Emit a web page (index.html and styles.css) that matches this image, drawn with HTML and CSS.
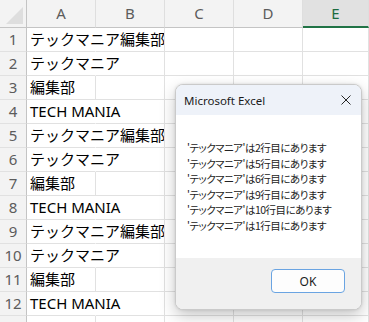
FILE: index.html
```html
<!DOCTYPE html>
<html lang="ja">
<head>
<meta charset="utf-8">
<link rel="stylesheet" href="styles.css">
</head>
<body>
<div class="sheet">
  <div class="row head">
    <div class="corner"><span class="tri"></span></div>
    <div class="ch">A</div><div class="ch">B</div><div class="ch">C</div><div class="ch">D</div><div class="ch sel">E</div>
  </div>
  <div class="row"><div class="rh">1</div><div class="c nb">テックマニア編集部</div><div class="c"></div><div class="c"></div><div class="c"></div><div class="c last"></div></div>
  <div class="row"><div class="rh">2</div><div class="c nb">テックマニア</div><div class="c"></div><div class="c"></div><div class="c"></div><div class="c last"></div></div>
  <div class="row"><div class="rh">3</div><div class="c">編集部</div><div class="c"></div><div class="c"></div><div class="c"></div><div class="c last"></div></div>
  <div class="row"><div class="rh">4</div><div class="c nb">TECH MANIA</div><div class="c"></div><div class="c"></div><div class="c"></div><div class="c last"></div></div>
  <div class="row"><div class="rh">5</div><div class="c nb">テックマニア編集部</div><div class="c"></div><div class="c"></div><div class="c"></div><div class="c last"></div></div>
  <div class="row"><div class="rh">6</div><div class="c nb">テックマニア</div><div class="c"></div><div class="c"></div><div class="c"></div><div class="c last"></div></div>
  <div class="row"><div class="rh">7</div><div class="c">編集部</div><div class="c"></div><div class="c"></div><div class="c"></div><div class="c last"></div></div>
  <div class="row"><div class="rh">8</div><div class="c nb">TECH MANIA</div><div class="c"></div><div class="c"></div><div class="c"></div><div class="c last"></div></div>
  <div class="row"><div class="rh">9</div><div class="c nb">テックマニア編集部</div><div class="c"></div><div class="c"></div><div class="c"></div><div class="c last"></div></div>
  <div class="row"><div class="rh">10</div><div class="c nb">テックマニア</div><div class="c"></div><div class="c"></div><div class="c"></div><div class="c last"></div></div>
  <div class="row"><div class="rh">11</div><div class="c">編集部</div><div class="c"></div><div class="c"></div><div class="c"></div><div class="c last"></div></div>
  <div class="row"><div class="rh">12</div><div class="c nb">TECH MANIA</div><div class="c"></div><div class="c"></div><div class="c"></div><div class="c last"></div></div>
  <div class="row"><div class="rh"></div><div class="c"></div><div class="c"></div><div class="c"></div><div class="c"></div><div class="c last"></div></div>
</div>

<div class="dlg">
  <div class="tb">
    <span class="title">Microsoft Excel</span>
    <svg class="close" width="10" height="10" viewBox="0 0 10 10"><path d="M0.5 0.5L9.5 9.5M9.5 0.5L0.5 9.5" stroke="#262626" stroke-width="1" fill="none"/></svg>
  </div>
  <div class="msg">
    <div>'テックマニア'は2行目にあります</div>
    <div>'テックマニア'は5行目にあります</div>
    <div>'テックマニア'は6行目にあります</div>
    <div>'テックマニア'は9行目にあります</div>
    <div>'テックマニア'は10行目にあります</div>
    <div>'テックマニア'は1行目にあります</div>
  </div>
  <div class="ft">
    <div class="ok">OK</div>
  </div>
</div>
</body>
</html>
```

FILE: styles.css
```css
* { box-sizing: border-box; }
html, body { margin: 0; padding: 0; }
body {
  width: 369px;
  height: 322px;
  overflow: hidden;
  background: #fff;
  position: relative;
  font-family: "Noto Sans", "Noto Sans CJK JP", sans-serif;
}
.sheet { display: flex; flex-direction: column; }
.row { display: flex; height: 24px; flex: none; }
.row.head { height: 28px; }

.corner {
  width: 27px;
  height: 28px;
  background: #f3f3f3;
  border-right: 1px solid #c4c4c4;
  border-bottom: 1px solid #c4c4c4;
  display: flex;
  align-items: flex-end;
  justify-content: flex-end;
  padding: 0 3px 3px 0;
}
.tri {
  width: 0;
  height: 0;
  border-left: 17px solid transparent;
  border-bottom: 17px solid #dedede;
}
.ch {
  width: 69px;
  height: 28px;
  flex: none;
  background: #f3f3f3;
  border-right: 1px solid #dedede;
  border-bottom: 1px solid #c4c4c4;
  text-align: center;
  font-size: 15px;
  line-height: 27px;
  color: #5c5c5c;
}
.ch.sel {
  flex: 1;
  background: #e1e1e1;
  color: #1c6b40;
  border-bottom: 2px solid #217346;
}
.rh {
  width: 27px;
  flex: none;
  background: #f3f3f3;
  border-right: 1px solid #c4c4c4;
  border-bottom: 1px solid #e1e1e1;
  text-align: center;
  font-size: 15px;
  line-height: 23px;
  color: #5c5c5c;
}
.c {
  width: 69px;
  flex: none;
  border-right: 1px solid #e1e1e1;
  border-bottom: 1px solid #e1e1e1;
  padding-left: 3px;
  font-size: 15px;
  line-height: 23px;
  white-space: nowrap;
  color: #000;
}
.c.nb { border-right-color: transparent; }
.c.last { flex: 1; }

.dlg {
  position: absolute;
  left: 175px;
  top: 84px;
  width: 187px;
  height: 226px;
  border: 1px solid #cacaca;
  border-radius: 8px;
  overflow: hidden;
  background: #fff;
  box-shadow: 0 6px 16px rgba(0, 0, 0, 0.22), 0 0 3px rgba(0, 0, 0, 0.12);
  display: flex;
  flex-direction: column;
}
.tb {
  height: 30px;
  flex: none;
  background: #eef2f9;
  display: flex;
  align-items: center;
  justify-content: space-between;
  padding: 0 10px 0 8px;
  font-family: "Noto Sans", sans-serif;
  font-size: 11.5px;
  color: #1b1b1b;
}
.close { display: block; }
.msg {
  flex: 1;
  padding: 25px 0 0 11px;
  font-family: "Noto Sans CJK JP", sans-serif;
  font-size: 10.5px;
  letter-spacing: -0.5px;
  line-height: 15.5px;
  font-feature-settings: "palt";
  color: #222;
  white-space: nowrap;
}
.ft {
  height: 51px;
  flex: none;
  background: #f0f0f0;
  display: flex;
  justify-content: flex-end;
  align-items: flex-start;
  padding: 11px 16px 0 0;
}
.ok {
  width: 74px;
  height: 24px;
  border: 1px solid #6aa4e2;
  border-radius: 4px;
  background: #fdfdfd;
  font-family: "Noto Sans", sans-serif;
  font-size: 12px;
  color: #1b1b1b;
  display: flex;
  align-items: center;
  justify-content: center;
}
```
